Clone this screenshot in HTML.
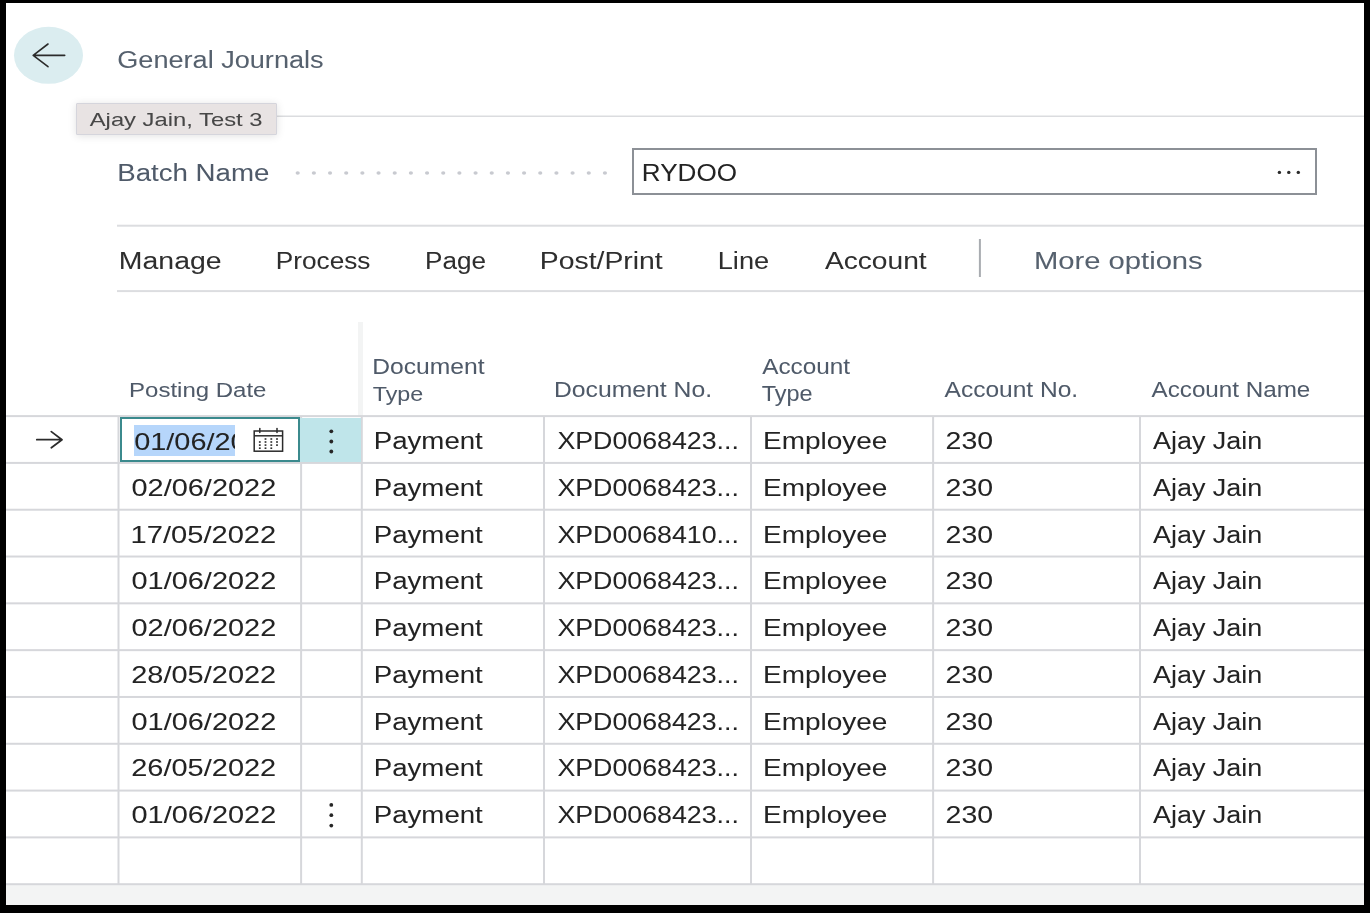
<!DOCTYPE html>
<html><head><meta charset="utf-8"><style>
html,body{margin:0;padding:0;}
body{width:1370px;height:913px;background:#000;position:relative;overflow:hidden;font-family:"Liberation Sans",sans-serif;}
#pg{position:absolute;left:6px;top:3px;width:1358px;height:902px;background:#fff;}
svg{position:absolute;left:0;top:0;will-change:transform;}
text{font-family:"Liberation Sans",sans-serif;white-space:pre;}
</style></head><body>
<svg width="1370" height="913"><rect x="6.00" y="3.00" width="1358.00" height="902.00" fill="#fff"/><rect x="117.00" y="115.60" width="1247.00" height="1.20" fill="#d3d4d8"/><rect x="117.00" y="224.70" width="1247.00" height="2.00" fill="#dcdde0"/><rect x="117.00" y="290.10" width="1247.00" height="2.00" fill="#dcdde0"/><rect x="978.90" y="239.00" width="2.00" height="38.00" fill="#a9acb1"/><rect x="358.00" y="322.00" width="5.00" height="94.00" fill="#f3f4f4"/><rect x="6.00" y="884.00" width="1358.00" height="21.00" fill="#f3f4f4"/><rect x="6.00" y="415.10" width="1358.00" height="2.00" fill="#d6d7db"/><rect x="6.00" y="461.91" width="1358.00" height="2.00" fill="#d6d7db"/><rect x="6.00" y="508.72" width="1358.00" height="2.00" fill="#d6d7db"/><rect x="6.00" y="555.53" width="1358.00" height="2.00" fill="#d6d7db"/><rect x="6.00" y="602.34" width="1358.00" height="2.00" fill="#d6d7db"/><rect x="6.00" y="649.15" width="1358.00" height="2.00" fill="#d6d7db"/><rect x="6.00" y="695.96" width="1358.00" height="2.00" fill="#d6d7db"/><rect x="6.00" y="742.77" width="1358.00" height="2.00" fill="#d6d7db"/><rect x="6.00" y="789.58" width="1358.00" height="2.00" fill="#d6d7db"/><rect x="6.00" y="836.39" width="1358.00" height="2.00" fill="#d6d7db"/><rect x="6.00" y="883.20" width="1358.00" height="2.00" fill="#d6d7db"/><rect x="117.50" y="416.00" width="2.00" height="468.20" fill="#d6d7db"/><rect x="300.10" y="416.00" width="2.00" height="468.20" fill="#d6d7db"/><rect x="360.80" y="416.00" width="2.00" height="468.20" fill="#d6d7db"/><rect x="543.00" y="416.00" width="2.00" height="468.20" fill="#d6d7db"/><rect x="750.00" y="416.00" width="2.00" height="468.20" fill="#d6d7db"/><rect x="932.10" y="416.00" width="2.00" height="468.20" fill="#d6d7db"/><rect x="1139.00" y="416.00" width="2.00" height="468.20" fill="#d6d7db"/></svg>
<!-- back button -->
<svg width="1370" height="913" style="position:absolute;left:0;top:0">
<ellipse cx="48.5" cy="55.3" rx="34.5" ry="28.5" fill="#dbedf0"/>
<path d="M64.7 55.4H33.2M48 44L33.2 55.4L48 66.7" fill="none" stroke="#2b2b2b" stroke-width="1.6" stroke-linecap="round" stroke-linejoin="round"/>
</svg>
<!-- tooltip -->
<div style="position:absolute;left:76px;top:103px;width:199px;height:30px;background:#e8e3e3;border:1px solid #d5d5dc;border-radius:1px;box-shadow:0 1px 9px rgba(0,0,0,0.12);"></div>
<!-- batch input -->
<div style="position:absolute;left:632px;top:148px;width:681px;height:43px;border:2px solid #8c9096;background:#fff;"></div>
<!-- row0 input -->
<div style="position:absolute;left:300px;top:418px;width:61px;height:44px;background:#bfe5ea;"></div>
<div style="position:absolute;left:120px;top:417px;width:176px;height:41px;border:2px solid #3b8a8d;background:#fff;"></div>
<div style="position:absolute;left:134px;top:425px;width:101px;height:31px;background:#b6d6fb;"></div>
<svg width="1370" height="913">
<defs><clipPath id="c1"><rect x="134" y="423.3" width="101" height="40"/></clipPath></defs>
<g><text transform="matrix(1.1231 0 0 1 117.24 68.10)" font-size="24.15" fill="#56616e" stroke="#56616e" stroke-width="0.04">General Journals</text></g><g><text transform="matrix(1.2390 0 0 1 89.74 125.60)" font-size="19.20" fill="#474747" stroke="#474747" stroke-width="0.04">Ajay Jain, Test 3</text></g><g><text transform="matrix(1.1600 0 0 1 117.22 180.60)" font-size="23.85" fill="#4f5a69" stroke="#4f5a69" stroke-width="0.04">Batch Name</text></g><g><text transform="matrix(1.0605 0 0 1 641.85 180.90)" font-size="24.58" fill="#232323" stroke="#232323" stroke-width="0.04">RYDOO</text></g><g><text transform="matrix(1.1924 0 0 1 118.85 268.60)" font-size="23.85" fill="#2e2e2e" stroke="#2e2e2e" stroke-width="0.04">Manage</text></g><g><text transform="matrix(1.0987 0 0 1 275.84 268.60)" font-size="23.85" fill="#2e2e2e" stroke="#2e2e2e" stroke-width="0.04">Process</text></g><g><text transform="matrix(1.0945 0 0 1 425.05 268.60)" font-size="23.85" fill="#2e2e2e" stroke="#2e2e2e" stroke-width="0.04">Page</text></g><g><text transform="matrix(1.1890 0 0 1 539.86 268.60)" font-size="23.85" fill="#2e2e2e" stroke="#2e2e2e" stroke-width="0.04">Post/Print</text></g><g><text transform="matrix(1.1401 0 0 1 717.76 268.60)" font-size="23.85" fill="#2e2e2e" stroke="#2e2e2e" stroke-width="0.04">Line</text></g><g><text transform="matrix(1.1811 0 0 1 824.93 268.60)" font-size="23.85" fill="#2e2e2e" stroke="#2e2e2e" stroke-width="0.04">Account</text></g><g><text transform="matrix(1.2252 0 0 1 1033.89 268.60)" font-size="23.85" fill="#56616e" stroke="#56616e" stroke-width="0.04">More options</text></g><g><text transform="matrix(1.1371 0 0 1 129.12 397.10)" font-size="21.09" fill="#4f5a69" stroke="#4f5a69" stroke-width="0.04">Posting Date</text></g><g><text transform="matrix(1.1615 0 0 1 372.26 374.00)" font-size="21.24" fill="#4f5a69" stroke="#4f5a69" stroke-width="0.04">Document</text></g><g><text transform="matrix(1.1205 0 0 1 372.78 400.60)" font-size="20.80" fill="#4f5a69" stroke="#4f5a69" stroke-width="0.04">Type</text></g><g><text transform="matrix(1.1644 0 0 1 553.96 397.10)" font-size="21.24" fill="#4f5a69" stroke="#4f5a69" stroke-width="0.04">Document No.</text></g><g><text transform="matrix(1.1450 0 0 1 762.24 373.80)" font-size="21.24" fill="#4f5a69" stroke="#4f5a69" stroke-width="0.04">Account</text></g><g><text transform="matrix(1.0989 0 0 1 761.77 400.60)" font-size="21.38" fill="#4f5a69" stroke="#4f5a69" stroke-width="0.04">Type</text></g><g><text transform="matrix(1.1555 0 0 1 944.54 397.30)" font-size="21.24" fill="#4f5a69" stroke="#4f5a69" stroke-width="0.04">Account No.</text></g><g><text transform="matrix(1.1403 0 0 1 1151.54 397.30)" font-size="21.24" fill="#4f5a69" stroke="#4f5a69" stroke-width="0.04">Account Name</text></g><g clip-path="url(#c1)"><text transform="matrix(1.2560 0 0 1 134.14 450.00)" font-size="23.03" fill="#232323" stroke="#232323" stroke-width="0.04">01/06/2022</text></g><g><text transform="matrix(1.1384 0 0 1 373.72 449.10)" font-size="24.29" fill="#232323" stroke="#232323" stroke-width="0.04">Payment</text></g><g><text transform="matrix(1.1023 0 0 1 557.40 449.10)" font-size="24.29" fill="#232323" stroke="#232323" stroke-width="0.04">XPD0068423...</text></g><g><text transform="matrix(1.1521 0 0 1 762.99 449.10)" font-size="24.29" fill="#232323" stroke="#232323" stroke-width="0.04">Employee</text></g><g><text transform="matrix(1.2365 0 0 1 945.58 449.10)" font-size="23.03" fill="#232323" stroke="#232323" stroke-width="0.04">230</text></g><g><text transform="matrix(1.1102 0 0 1 1152.93 449.10)" font-size="24.29" fill="#232323" stroke="#232323" stroke-width="0.04">Ajay Jain</text></g><g><text transform="matrix(1.2560 0 0 1 131.54 495.86)" font-size="23.03" fill="#232323" stroke="#232323" stroke-width="0.04">02/06/2022</text></g><g><text transform="matrix(1.1384 0 0 1 373.72 495.86)" font-size="24.29" fill="#232323" stroke="#232323" stroke-width="0.04">Payment</text></g><g><text transform="matrix(1.1023 0 0 1 557.40 495.86)" font-size="24.29" fill="#232323" stroke="#232323" stroke-width="0.04">XPD0068423...</text></g><g><text transform="matrix(1.1521 0 0 1 762.99 495.86)" font-size="24.29" fill="#232323" stroke="#232323" stroke-width="0.04">Employee</text></g><g><text transform="matrix(1.2365 0 0 1 945.58 495.86)" font-size="23.03" fill="#232323" stroke="#232323" stroke-width="0.04">230</text></g><g><text transform="matrix(1.1102 0 0 1 1152.93 495.86)" font-size="24.29" fill="#232323" stroke="#232323" stroke-width="0.04">Ajay Jain</text></g><g><text transform="matrix(1.2650 0 0 1 130.51 542.62)" font-size="23.03" fill="#232323" stroke="#232323" stroke-width="0.04">17/05/2022</text></g><g><text transform="matrix(1.1384 0 0 1 373.72 542.62)" font-size="24.29" fill="#232323" stroke="#232323" stroke-width="0.04">Payment</text></g><g><text transform="matrix(1.1023 0 0 1 557.40 542.62)" font-size="24.29" fill="#232323" stroke="#232323" stroke-width="0.04">XPD0068410...</text></g><g><text transform="matrix(1.1521 0 0 1 762.99 542.62)" font-size="24.29" fill="#232323" stroke="#232323" stroke-width="0.04">Employee</text></g><g><text transform="matrix(1.2365 0 0 1 945.58 542.62)" font-size="23.03" fill="#232323" stroke="#232323" stroke-width="0.04">230</text></g><g><text transform="matrix(1.1102 0 0 1 1152.93 542.62)" font-size="24.29" fill="#232323" stroke="#232323" stroke-width="0.04">Ajay Jain</text></g><g><text transform="matrix(1.2560 0 0 1 131.54 589.38)" font-size="23.03" fill="#232323" stroke="#232323" stroke-width="0.04">01/06/2022</text></g><g><text transform="matrix(1.1384 0 0 1 373.72 589.38)" font-size="24.29" fill="#232323" stroke="#232323" stroke-width="0.04">Payment</text></g><g><text transform="matrix(1.1023 0 0 1 557.40 589.38)" font-size="24.29" fill="#232323" stroke="#232323" stroke-width="0.04">XPD0068423...</text></g><g><text transform="matrix(1.1521 0 0 1 762.99 589.38)" font-size="24.29" fill="#232323" stroke="#232323" stroke-width="0.04">Employee</text></g><g><text transform="matrix(1.2365 0 0 1 945.58 589.38)" font-size="23.03" fill="#232323" stroke="#232323" stroke-width="0.04">230</text></g><g><text transform="matrix(1.1102 0 0 1 1152.93 589.38)" font-size="24.29" fill="#232323" stroke="#232323" stroke-width="0.04">Ajay Jain</text></g><g><text transform="matrix(1.2560 0 0 1 131.54 636.14)" font-size="23.03" fill="#232323" stroke="#232323" stroke-width="0.04">02/06/2022</text></g><g><text transform="matrix(1.1384 0 0 1 373.72 636.14)" font-size="24.29" fill="#232323" stroke="#232323" stroke-width="0.04">Payment</text></g><g><text transform="matrix(1.1023 0 0 1 557.40 636.14)" font-size="24.29" fill="#232323" stroke="#232323" stroke-width="0.04">XPD0068423...</text></g><g><text transform="matrix(1.1521 0 0 1 762.99 636.14)" font-size="24.29" fill="#232323" stroke="#232323" stroke-width="0.04">Employee</text></g><g><text transform="matrix(1.2365 0 0 1 945.58 636.14)" font-size="23.03" fill="#232323" stroke="#232323" stroke-width="0.04">230</text></g><g><text transform="matrix(1.1102 0 0 1 1152.93 636.14)" font-size="24.29" fill="#232323" stroke="#232323" stroke-width="0.04">Ajay Jain</text></g><g><text transform="matrix(1.2586 0 0 1 131.25 682.90)" font-size="23.03" fill="#232323" stroke="#232323" stroke-width="0.04">28/05/2022</text></g><g><text transform="matrix(1.1384 0 0 1 373.72 682.90)" font-size="24.29" fill="#232323" stroke="#232323" stroke-width="0.04">Payment</text></g><g><text transform="matrix(1.1023 0 0 1 557.40 682.90)" font-size="24.29" fill="#232323" stroke="#232323" stroke-width="0.04">XPD0068423...</text></g><g><text transform="matrix(1.1521 0 0 1 762.99 682.90)" font-size="24.29" fill="#232323" stroke="#232323" stroke-width="0.04">Employee</text></g><g><text transform="matrix(1.2365 0 0 1 945.58 682.90)" font-size="23.03" fill="#232323" stroke="#232323" stroke-width="0.04">230</text></g><g><text transform="matrix(1.1102 0 0 1 1152.93 682.90)" font-size="24.29" fill="#232323" stroke="#232323" stroke-width="0.04">Ajay Jain</text></g><g><text transform="matrix(1.2560 0 0 1 131.54 729.66)" font-size="23.03" fill="#232323" stroke="#232323" stroke-width="0.04">01/06/2022</text></g><g><text transform="matrix(1.1384 0 0 1 373.72 729.66)" font-size="24.29" fill="#232323" stroke="#232323" stroke-width="0.04">Payment</text></g><g><text transform="matrix(1.1023 0 0 1 557.40 729.66)" font-size="24.29" fill="#232323" stroke="#232323" stroke-width="0.04">XPD0068423...</text></g><g><text transform="matrix(1.1521 0 0 1 762.99 729.66)" font-size="24.29" fill="#232323" stroke="#232323" stroke-width="0.04">Employee</text></g><g><text transform="matrix(1.2365 0 0 1 945.58 729.66)" font-size="23.03" fill="#232323" stroke="#232323" stroke-width="0.04">230</text></g><g><text transform="matrix(1.1102 0 0 1 1152.93 729.66)" font-size="24.29" fill="#232323" stroke="#232323" stroke-width="0.04">Ajay Jain</text></g><g><text transform="matrix(1.2586 0 0 1 131.25 776.42)" font-size="23.03" fill="#232323" stroke="#232323" stroke-width="0.04">26/05/2022</text></g><g><text transform="matrix(1.1384 0 0 1 373.72 776.42)" font-size="24.29" fill="#232323" stroke="#232323" stroke-width="0.04">Payment</text></g><g><text transform="matrix(1.1023 0 0 1 557.40 776.42)" font-size="24.29" fill="#232323" stroke="#232323" stroke-width="0.04">XPD0068423...</text></g><g><text transform="matrix(1.1521 0 0 1 762.99 776.42)" font-size="24.29" fill="#232323" stroke="#232323" stroke-width="0.04">Employee</text></g><g><text transform="matrix(1.2365 0 0 1 945.58 776.42)" font-size="23.03" fill="#232323" stroke="#232323" stroke-width="0.04">230</text></g><g><text transform="matrix(1.1102 0 0 1 1152.93 776.42)" font-size="24.29" fill="#232323" stroke="#232323" stroke-width="0.04">Ajay Jain</text></g><g><text transform="matrix(1.2560 0 0 1 131.54 823.18)" font-size="23.03" fill="#232323" stroke="#232323" stroke-width="0.04">01/06/2022</text></g><g><text transform="matrix(1.1384 0 0 1 373.72 823.18)" font-size="24.29" fill="#232323" stroke="#232323" stroke-width="0.04">Payment</text></g><g><text transform="matrix(1.1023 0 0 1 557.40 823.18)" font-size="24.29" fill="#232323" stroke="#232323" stroke-width="0.04">XPD0068423...</text></g><g><text transform="matrix(1.1521 0 0 1 762.99 823.18)" font-size="24.29" fill="#232323" stroke="#232323" stroke-width="0.04">Employee</text></g><g><text transform="matrix(1.2365 0 0 1 945.58 823.18)" font-size="23.03" fill="#232323" stroke="#232323" stroke-width="0.04">230</text></g><g><text transform="matrix(1.1102 0 0 1 1152.93 823.18)" font-size="24.29" fill="#232323" stroke="#232323" stroke-width="0.04">Ajay Jain</text></g>
<ellipse cx="297.70" cy="173.1" rx="2.1" ry="1.75" fill="#c8cad0"/><ellipse cx="313.87" cy="173.1" rx="2.1" ry="1.75" fill="#c8cad0"/><ellipse cx="330.04" cy="173.1" rx="2.1" ry="1.75" fill="#c8cad0"/><ellipse cx="346.21" cy="173.1" rx="2.1" ry="1.75" fill="#c8cad0"/><ellipse cx="362.38" cy="173.1" rx="2.1" ry="1.75" fill="#c8cad0"/><ellipse cx="378.55" cy="173.1" rx="2.1" ry="1.75" fill="#c8cad0"/><ellipse cx="394.72" cy="173.1" rx="2.1" ry="1.75" fill="#c8cad0"/><ellipse cx="410.89" cy="173.1" rx="2.1" ry="1.75" fill="#c8cad0"/><ellipse cx="427.06" cy="173.1" rx="2.1" ry="1.75" fill="#c8cad0"/><ellipse cx="443.23" cy="173.1" rx="2.1" ry="1.75" fill="#c8cad0"/><ellipse cx="459.40" cy="173.1" rx="2.1" ry="1.75" fill="#c8cad0"/><ellipse cx="475.57" cy="173.1" rx="2.1" ry="1.75" fill="#c8cad0"/><ellipse cx="491.74" cy="173.1" rx="2.1" ry="1.75" fill="#c8cad0"/><ellipse cx="507.91" cy="173.1" rx="2.1" ry="1.75" fill="#c8cad0"/><ellipse cx="524.08" cy="173.1" rx="2.1" ry="1.75" fill="#c8cad0"/><ellipse cx="540.25" cy="173.1" rx="2.1" ry="1.75" fill="#c8cad0"/><ellipse cx="556.42" cy="173.1" rx="2.1" ry="1.75" fill="#c8cad0"/><ellipse cx="572.59" cy="173.1" rx="2.1" ry="1.75" fill="#c8cad0"/><ellipse cx="588.76" cy="173.1" rx="2.1" ry="1.75" fill="#c8cad0"/><ellipse cx="604.93" cy="173.1" rx="2.1" ry="1.75" fill="#c8cad0"/><circle cx="1279.4" cy="172.4" r="1.7" fill="#2a2a2a"/><circle cx="1288.8" cy="172.4" r="1.7" fill="#2a2a2a"/><circle cx="1298.3" cy="172.4" r="1.7" fill="#2a2a2a"/><path d="M36.8 439.7H62M51.3 431.6L62 439.7L51.3 447.8" fill="none" stroke="#2b2b2b" stroke-width="1.75" stroke-linecap="round" stroke-linejoin="round"/><circle cx="331.3" cy="431.3" r="1.9" fill="#262626"/><circle cx="331.3" cy="441.5" r="1.9" fill="#262626"/><circle cx="331.3" cy="451.5" r="1.9" fill="#262626"/><circle cx="331.3" cy="804.9" r="1.9" fill="#262626"/><circle cx="331.3" cy="815.2" r="1.9" fill="#262626"/><circle cx="331.3" cy="825.6" r="1.9" fill="#262626"/><g fill="none" stroke="#2b2b2b" stroke-width="1.5"><rect x="254.2" y="431" width="28.4" height="20.2"/><line x1="254.2" y1="435.8" x2="282.6" y2="435.8"/><line x1="259.8" y1="428.6" x2="259.8" y2="432.5" stroke-linecap="round"/><line x1="277" y1="428.6" x2="277" y2="432.5" stroke-linecap="round"/></g><rect x="264.60" y="438.20" width="1.8" height="1.6" fill="#2b2b2b"/><rect x="270.40" y="438.20" width="1.8" height="1.6" fill="#2b2b2b"/><rect x="276.10" y="438.20" width="1.8" height="1.6" fill="#2b2b2b"/><rect x="258.90" y="441.20" width="1.8" height="1.6" fill="#2b2b2b"/><rect x="264.60" y="441.20" width="1.8" height="1.6" fill="#2b2b2b"/><rect x="270.40" y="441.20" width="1.8" height="1.6" fill="#2b2b2b"/><rect x="276.10" y="441.20" width="1.8" height="1.6" fill="#2b2b2b"/><rect x="258.90" y="444.30" width="1.8" height="1.6" fill="#2b2b2b"/><rect x="264.60" y="444.30" width="1.8" height="1.6" fill="#2b2b2b"/><rect x="270.40" y="444.30" width="1.8" height="1.6" fill="#2b2b2b"/><rect x="276.10" y="444.30" width="1.8" height="1.6" fill="#2b2b2b"/><rect x="258.90" y="447.40" width="1.8" height="1.6" fill="#2b2b2b"/><rect x="264.60" y="447.40" width="1.8" height="1.6" fill="#2b2b2b"/><rect x="270.40" y="447.40" width="1.8" height="1.6" fill="#2b2b2b"/>
</svg>
</body></html>
